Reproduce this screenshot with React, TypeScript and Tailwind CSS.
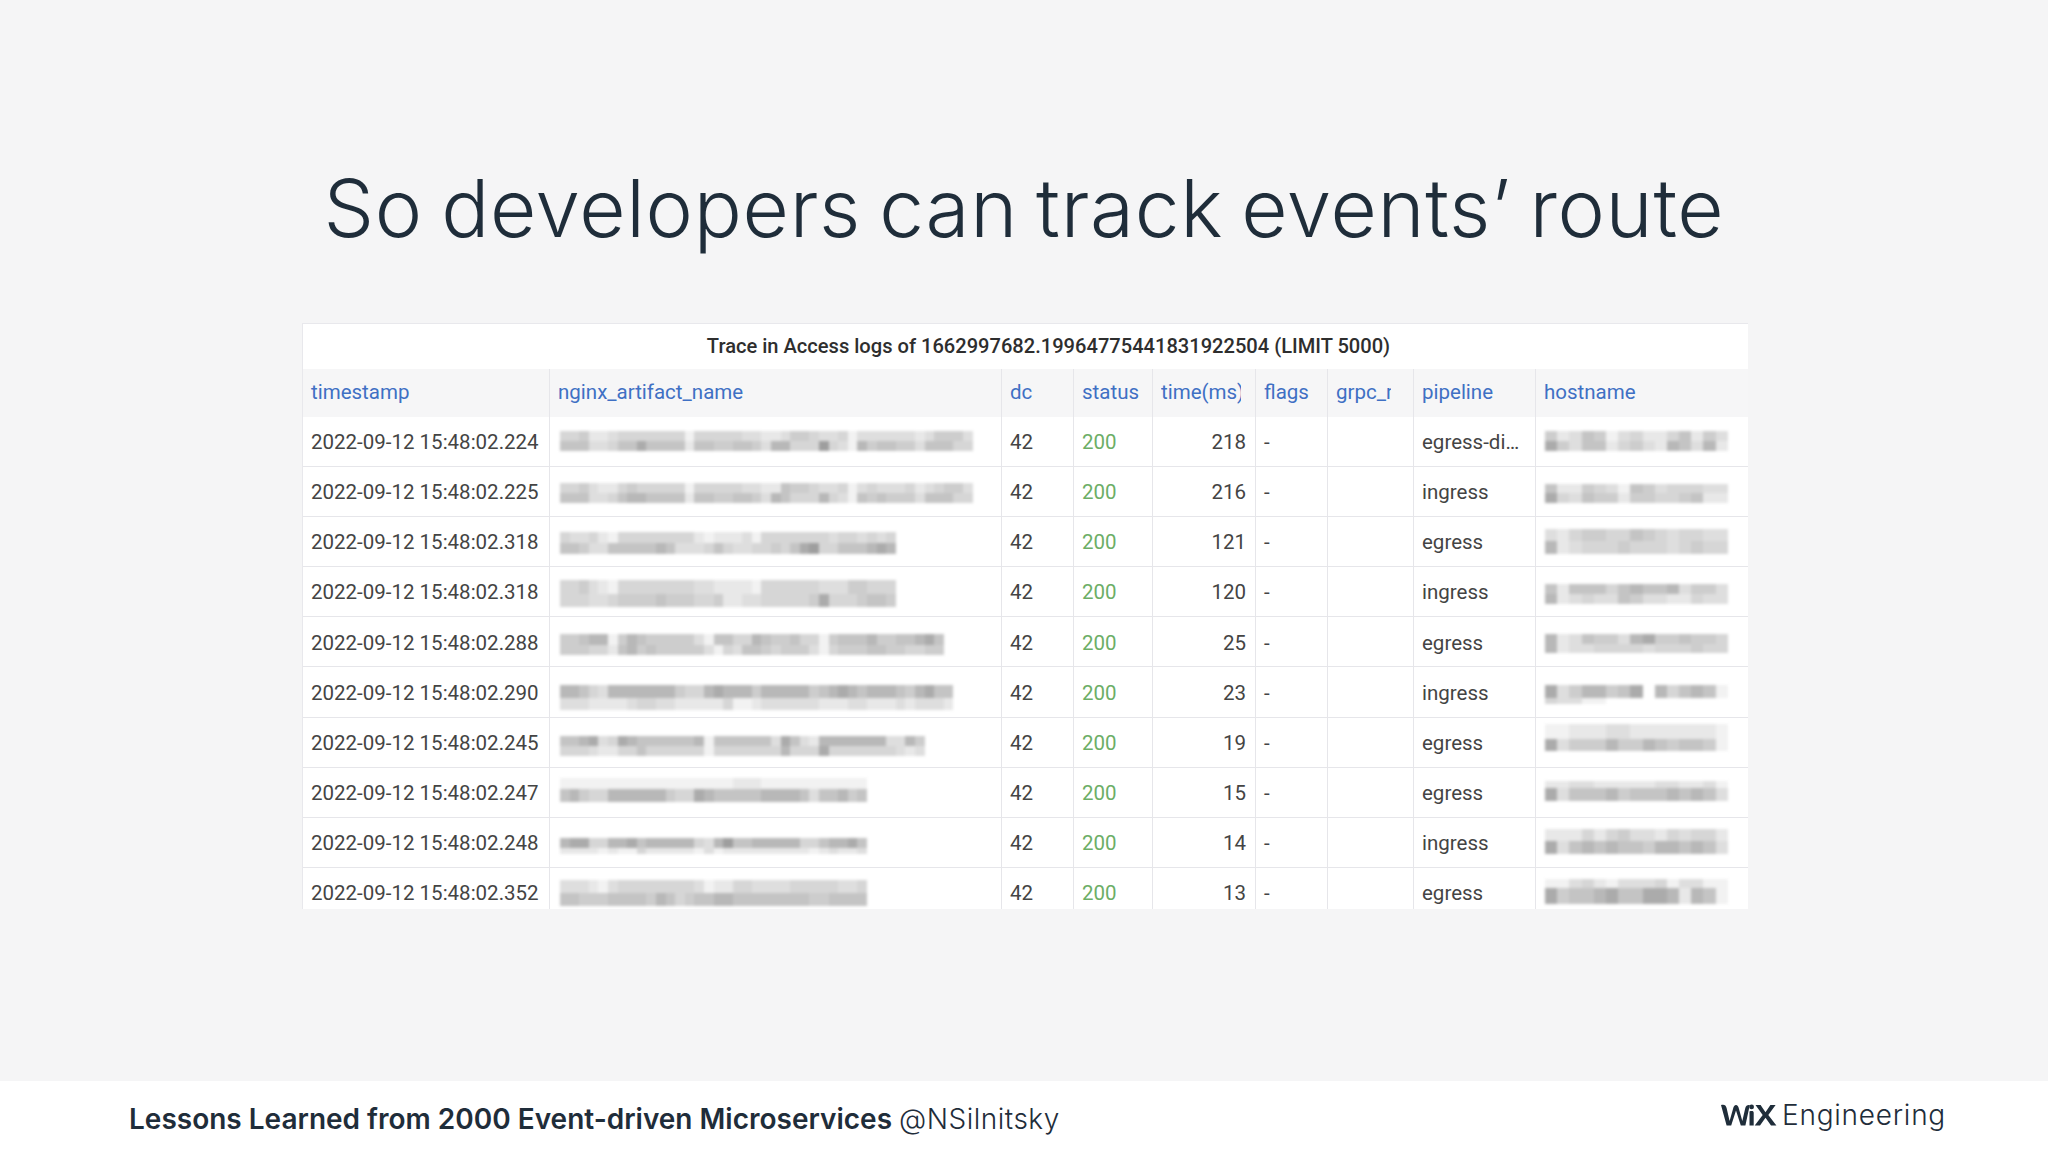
const LEVELS = ["#ffffff", "#f2f2f2", "#e8e8e8", "#dedede", "#d6d6d6", "#cdcdcd", "#c4c4c4", "#b8b8b8", "#ababab", "#9e9e9e"];

type Blur = { mt: number; h: [number, number]; s: [string, string] };

const ROWS = [
  { ts: "224", time: "218", pipe: "egress-di…",
    name: { mt: 14, h: [10, 10], s: ["4452234444444144444332235543341333333235553", "6663346686666266556653774449431756655366644"] },
    host: { mt: 14, h: [10, 10], s: ["523651342246253", "853662453276372"] } },
  { ts: "225", time: "216", pipe: "ingress",
    name: { mt: 16, h: [10, 10], s: ["4453224544444144444332265543341343334234553", "6663346776666266556653764447431656555366644"] },
    host: { mt: 17, h: [9, 10], s: ["622543165344433", "843655255445622"] } },
  { ts: "318", time: "121", pipe: "egress",
    name: { mt: 15, h: [11, 11], s: ["43342144444444212223144444443443434", "66533666667633346433445468944666787"] },
    host: { mt: 12, h: [12, 13], s: ["324554465434433", "723444544434544"] } },
  { ts: "318", time: "120", pipe: "ingress",
    name: { mt: 13, h: [14, 13], s: ["44532144444444332222144444433355444", "44433455556555445223344444584445665"] },
    host: { mt: 17, h: [10, 10], s: ["626664676673553", "723433653322433"] } },
  { ts: "288", time: "25", pipe: "egress",
    name: { mt: 17, h: [11, 10], s: ["5567715765555531664476556441566675566786", "5554426756555553143665455531455566554455"] },
    host: { mt: 17, h: [10, 9], s: ["723655378556554", "723344443444544"] } },
  { ts: "290", time: "23", pipe: "ingress",
    name: { mt: 18, h: [13, 12], s: ["77643777777754478777577777567876777657866", "33322223443322222411233333322233222323332"] },
    host: { mt: 18, h: [13, 6], s: ["835775680746761", "433110000000000"] } },
  { ts: "245", time: "19", pipe: "egress",
    name: { mt: 18, h: [10, 10], s: ["66783487666666716666663863277777773375", "44432244644444414444444744484444444323"] },
    host: { mt: 6, h: [15, 12], s: ["112223322222221", "835557557656651"] } },
  { ts: "247", time: "15", pipe: "egress",
    name: { mt: 10, h: [11, 13], s: ["11111111111111111122211111111111", "67544777777544876666677776366756"] },
    host: { mt: 13, h: [7, 13], s: ["223322222332231", "836667566676763"] } },
  { ts: "248", time: "14", pipe: "ingress",
    name: { mt: 20, h: [10, 6], s: ["78844778677777437966777774467786", "22221211422222131222222222123223"] },
    host: { mt: 11, h: [12, 13], s: ["222424533243442", "836767665776763"] } },
  { ts: "352", time: "13", pipe: "egress",
    name: { mt: 12, h: [13, 13], s: ["33321344444444312244333344444334", "66555666657645667766666666556666"] },
    host: { mt: 11, h: [9, 16], s: ["113421333413311", "856678668872761"] } },
] as { ts: string; time: string; pipe: string; name: Blur; host: Blur }[];

function Mosaic({ b, w }: { b: Blur; w: number }) {
  return (
    <div className="blur-[1.5px]" style={{ marginTop: b.mt }}>
      {b.s.map((s, i) => (
        <div key={i} className="flex" style={{ height: b.h[i] }}>
          {s.split("").map((c, j) => (
            <div key={j} style={{ width: w, backgroundColor: LEVELS[Number(c)] }} />
          ))}
        </div>
      ))}
    </div>
  );
}

const GRID = "grid grid-cols-[247px_452px_72px_79px_103px_72px_86px_122px_212px]";
const HEAD = "h-[48px] pb-[2px] border-r border-[#e6e6ea] pl-[8px] flex items-center text-[#3f70c4] font-normal overflow-hidden whitespace-nowrap";
const CELL = "h-[49.1px] pt-[2px] border-r border-[#e6e6ea] flex items-center pl-[8px] whitespace-nowrap";

export default function App() {
  return (
    <div className="w-[2048px] h-[1152px] flex flex-col bg-[#f5f5f6] font-['Inter',sans-serif] overflow-hidden">
      <h1 className="h-[323px] pt-[159px] text-center text-[80px] leading-[97px] font-light text-[#1f2d3a] tracking-[0.7px] [word-spacing:-5px] whitespace-nowrap">
        So developers can track events’ route
      </h1>

      <div className="mx-[302px] w-[1446px] h-[586px] overflow-hidden border-l border-t border-[#e8e8ec] bg-white font-['Roboto',sans-serif] text-[20.5px] text-[#444444]">
        <div className="h-[45px] pl-[46px] flex items-center justify-center font-medium text-[20.1px] text-[#2e2e2e]">
          Trace in Access logs of 1662997682.19964775441831922504 (LIMIT 5000)
        </div>
        <div className={`${GRID} bg-[#f6f6f7]`}>
          <div className={HEAD}>timestamp</div>
          <div className={HEAD}>nginx_artifact_name</div>
          <div className={HEAD}>dc</div>
          <div className={HEAD}><span className="w-[58px] overflow-hidden">status</span></div>
          <div className={HEAD}><span className="w-[80px] overflow-hidden">time(ms)</span></div>
          <div className={HEAD}>flags</div>
          <div className={HEAD}><span className="w-[55px] overflow-hidden">grpc_response</span></div>
          <div className={HEAD}>pipeline</div>
          <div className={`${HEAD} border-r-0`}>hostname</div>
        </div>
        {ROWS.map((r, i) => (
          <div key={i} className={`${GRID} border-b border-[#e6e6ea]`}>
            <div className={CELL}>2022-09-12 15:48:02.{r.ts}</div>
            <div className="h-[49.1px] border-r border-[#e6e6ea] pl-[10px] overflow-hidden">
              <Mosaic b={r.name} w={9.6} />
            </div>
            <div className={CELL}>42</div>
            <div className={`${CELL} text-[#6cae66]`}>200</div>
            <div className={`${CELL} justify-end pr-[9px]`}>{r.time}</div>
            <div className={CELL}>-</div>
            <div className={CELL} />
            <div className={CELL}>{r.pipe}</div>
            <div className="h-[49.1px] pl-[9px] overflow-hidden">
              <Mosaic b={r.host} w={12.2} />
            </div>
          </div>
        ))}
      </div>

      <div className="mt-auto h-[71px] bg-white flex items-start justify-between pl-[129px] pr-[102px]">
        <div className="pt-[21px] text-[28px] leading-[34px] text-[#1f2d3a] font-semibold tracking-[0px] whitespace-nowrap">
          Lessons Learned from 2000 Event-driven Microservices <span className="font-light tracking-[0.5px]">@NSilnitsky</span>
        </div>
        <div className="pt-[17px] flex items-center gap-[5px]">
          <svg width="56" height="22" viewBox="0 0 56 22" fill="#1f2d3a" aria-label="WiX">
            <path d="M0 1 C3 0 5 1 5.6 4 L8.6 17 L12 5 C12.8 2 13.5 1 15 1 C16.5 1 17.2 2 18 5 L21.3 17 L24.3 4 C24.9 1.5 26.5 0.6 28.8 1 L24.4 21.4 L19.8 21.4 L15 6.5 L10.2 21.4 L5.6 21.4 Z" />
            <circle cx="30.6" cy="2.9" r="2.4" />
            <path d="M28.5 7.4 C30 7 32.7 6.6 32.7 8.8 L32.7 21.4 L28.5 21.4 Z" />
            <path d="M34.5 1 L39.6 1 L44.5 8.3 L49.4 1 L54.6 1 L47.3 11 L55.4 21.4 L50 21.4 L44.5 13.8 L39 21.4 L33.7 21.4 L41.7 11 Z" />
          </svg>
          <span className="text-[28px] leading-[34px] font-light text-[#1f2d3a] tracking-[0.75px]">Engineering</span>
        </div>
      </div>
    </div>
  );
}
